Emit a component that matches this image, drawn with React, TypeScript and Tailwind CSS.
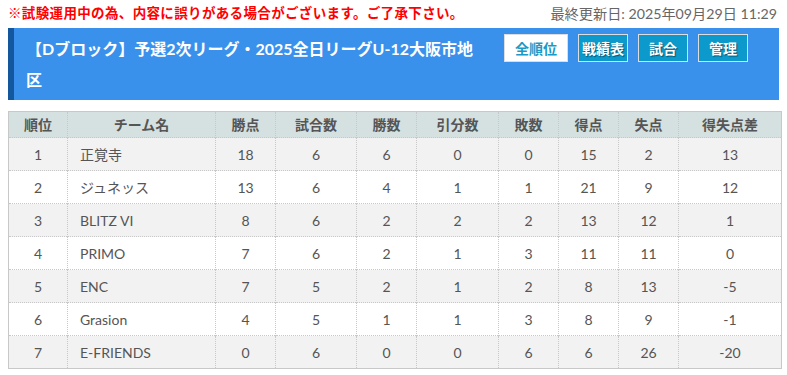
const rows = [
  { rank: 1, team: '正覚寺', pts: 18, played: 6, win: 6, draw: 0, lose: 0, gf: 15, ga: 2, diff: 13 },
  { rank: 2, team: 'ジュネッス', pts: 13, played: 6, win: 4, draw: 1, lose: 1, gf: 21, ga: 9, diff: 12 },
  { rank: 3, team: 'BLITZ VI', pts: 8, played: 6, win: 2, draw: 2, lose: 2, gf: 13, ga: 12, diff: 1 },
  { rank: 4, team: 'PRIMO', pts: 7, played: 6, win: 2, draw: 1, lose: 3, gf: 11, ga: 11, diff: 0 },
  { rank: 5, team: 'ENC', pts: 7, played: 5, win: 2, draw: 1, lose: 2, gf: 8, ga: 13, diff: -5 },
  { rank: 6, team: 'Grasion', pts: 4, played: 5, win: 1, draw: 1, lose: 3, gf: 8, ga: 9, diff: -1 },
  { rank: 7, team: 'E-FRIENDS', pts: 0, played: 6, win: 0, draw: 0, lose: 6, gf: 6, ga: 26, diff: -20 },
];

const columns = [
  { label: '順位', w: 'w-[59px]' },
  { label: 'チーム名', w: 'w-[148px]' },
  { label: '勝点', w: 'w-[60px]' },
  { label: '試合数', w: 'w-[81px]' },
  { label: '勝数', w: 'w-[60px]' },
  { label: '引分数', w: 'w-[82px]' },
  { label: '敗数', w: 'w-[60px]' },
  { label: '得点', w: 'w-[60px]' },
  { label: '失点', w: 'w-[60px]' },
  { label: '得失点差', w: '' },
];

const font = 'font-["Lato","Noto_Sans_CJK_JP",sans-serif]';
const cell = 'border-l border-dotted border-[#c8c8c8] first:border-l-0 text-center';

export default function App() {
  return (
    <div className={`w-[787px] h-[375px] overflow-hidden bg-white ${font}`}>
      <div className="flex items-center justify-between pl-2 pr-[10px] h-[27px]">
        <p className="text-[13.5px] font-bold text-[#ff0000] tracking-[0.35px]">
          ※試験運用中の為、内容に誤りがある場合がございます。ご了承下さい。
        </p>
        <p className="text-[14.2px] text-[#666]">最終更新日: 2025年09月29日 11:29</p>
      </div>

      <div className="mx-2 mt-px flex h-[72px] border-l-[6px] border-[#13589f] bg-[#3a91ec]">
        <h1 className="w-[470px] pl-3 pt-[5px] text-[16px] font-bold leading-[31px] text-white">
          【Dブロック】予選2次リーグ・2025全日リーグU-12大阪市地区
        </h1>
        <div className="flex gap-[10px] pl-[20px] pt-[6px]">
          <button className="h-[28px] w-[64px] border border-[#dddddd] bg-white text-[14px] font-bold text-[#1a9ac6]">
            全順位
          </button>
          {['戦績表', '試合', '管理'].map((t) => (
            <button
              key={t}
              className="h-[28px] w-[50px] border border-[#dddddd] bg-[#0b9acb] text-[14px] font-bold text-white [text-shadow:1px_1px_1px_rgba(0,0,0,0.45)]"
            >
              {t}
            </button>
          ))}
        </div>
      </div>

      <table className="mx-2 mt-[11px] w-[774px] table-fixed border-collapse border border-[#c8c8c8] text-[14px] text-[#555]">
        <thead>
          <tr className="h-[26px] bg-[#d5e0e0]">
            {columns.map((c) => (
              <th key={c.label} className={`${c.w} ${cell} font-bold text-[#555]`}>
                {c.label}
              </th>
            ))}
          </tr>
        </thead>
        <tbody>
          {rows.map((r, i) => (
            <tr
              key={r.rank}
              className={`h-[33px] border-t border-dotted border-[#c8c8c8] ${i % 2 === 0 ? 'bg-[#f2f2f2]' : 'bg-white'}`}
            >
              <td className={cell}>{r.rank}</td>
              <td className={`${cell} !text-left pl-3`}>{r.team}</td>
              <td className={cell}>{r.pts}</td>
              <td className={cell}>{r.played}</td>
              <td className={cell}>{r.win}</td>
              <td className={cell}>{r.draw}</td>
              <td className={cell}>{r.lose}</td>
              <td className={cell}>{r.gf}</td>
              <td className={cell}>{r.ga}</td>
              <td className={cell}>{r.diff}</td>
            </tr>
          ))}
        </tbody>
      </table>
    </div>
  );
}
